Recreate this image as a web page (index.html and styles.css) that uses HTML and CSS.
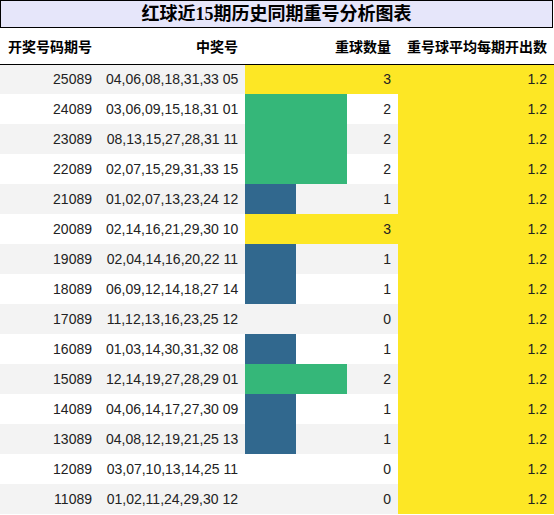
FILE: index.html
```html
<!DOCTYPE html>
<html lang="zh">
<head>
    <meta charset="UTF-8">
    <title>红球近15期历史同期重号分析图表</title>
    <link rel="stylesheet" href="styles.css">
</head>
<body>

<div class="chart">
    <div class="title">红球近15期历史同期重号分析图表</div>

    <table class="grid">
        <thead>
            <tr>
                <th class="c-issue">开奖号码期号</th>
                <th class="c-nums">中奖号</th>
                <th class="c-count">重球数量</th>
                <th class="c-avg">重号球平均每期开出数</th>
            </tr>
        </thead>
        <tbody id="rows"></tbody>
    </table>
</div>

<script>
    // issue, winning numbers, repeat count
    const history = [
        ['25089', '04,06,08,18,31,33 05', 3],
        ['24089', '03,06,09,15,18,31 01', 2],
        ['23089', '08,13,15,27,28,31 11', 2],
        ['22089', '02,07,15,29,31,33 15', 2],
        ['21089', '01,02,07,13,23,24 12', 1],
        ['20089', '02,14,16,21,29,30 10', 3],
        ['19089', '02,04,14,16,20,22 11', 1],
        ['18089', '06,09,12,14,18,27 14', 1],
        ['17089', '11,12,13,16,23,25 12', 0],
        ['16089', '01,03,14,30,31,32 08', 1],
        ['15089', '12,14,19,27,28,29 01', 2],
        ['14089', '04,06,14,17,27,30 09', 1],
        ['13089', '04,08,12,19,21,25 13', 1],
        ['12089', '03,07,10,13,14,25 11', 0],
        ['11089', '01,02,11,24,29,30 12', 0]
    ];

    const barColors = { 1: '#31688e', 2: '#35b779', 3: '#fde725' };
    const maxCount = 3;
    const avg = '1.2';

    const tbody = document.getElementById('rows');
    history.forEach(([issue, nums, count]) => {
        const tr = document.createElement('tr');
        const pct = count / maxCount * 100;
        const bar = count > 0
            ? `<span class="bar" style="width:${pct}%;background:${barColors[count]}"></span>`
            : '';
        tr.innerHTML = `
            <td class="c-issue">${issue}</td>
            <td class="c-nums">${nums}</td>
            <td class="c-count">${bar}<span class="val">${count}</span></td>
            <td class="c-avg">${avg}</td>
        `;
        tbody.appendChild(tr);
    });
</script>

</body>
</html>
```

FILE: styles.css
```css
body {
    margin: 0;
    background-color: #fff;
    font-family: "Liberation Sans", "Noto Sans CJK SC", sans-serif;
    color: #222;
}
.chart {
    width: 554px;
}
.title {
    width: 551px;
    height: 26px;
    line-height: 26px;
    border: 1px solid #000;
    background-color: #e6e6fa;
    text-align: center;
    font-family: "Liberation Serif", "Noto Sans CJK SC", serif;
    font-size: 18px;
    font-weight: bold;
    color: #000;
}
.grid {
    width: 554px;
    border-collapse: collapse;
    table-layout: fixed;
    font-size: 14px;
}
.grid th {
    height: 36px;
    padding: 0 7px;
    text-align: right;
    font-weight: bold;
    color: #000;
    border-bottom: 1px solid #000;
    box-sizing: border-box;
    white-space: nowrap;
}
.grid td {
    height: 30px;
    padding: 0 7px;
    text-align: right;
    box-sizing: border-box;
    white-space: nowrap;
}
.grid tbody tr:nth-child(odd) {
    background-color: #f3f3f3;
}
.c-issue {
    width: 99px;
}
.c-nums {
    width: 146px;
}
.c-count {
    width: 153px;
}
.c-avg {
    width: 156px;
}
td.c-avg {
    background-color: #fde725;
}
td.c-count {
    position: relative;
}
.bar {
    position: absolute;
    left: 0;
    top: 0;
    bottom: 0;
}
.val {
    position: relative;
}
```
